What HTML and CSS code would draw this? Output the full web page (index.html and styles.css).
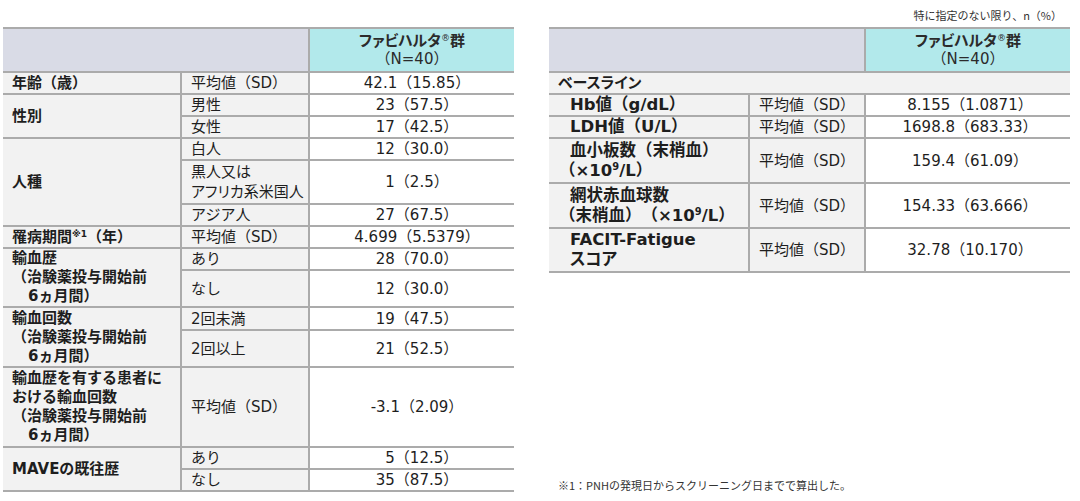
FILE: index.html
```html
<!DOCTYPE html>
<html lang="ja">
<head>
<meta charset="utf-8">
<title>ベースライン特性</title>
<link rel="stylesheet" href="styles.css">
</head>
<body>
<div class="page">
  <div class="col-left">
    <table class="tbl tbl-left">
      <colgroup><col class="l1"><col class="l2"><col class="l3"></colgroup>
      <thead>
        <tr class="h44"><th colspan="2" class="hd-gray"></th><th class="hd-cyan"><div class="hd-title">ファビハルタ<sup class="reg">®</sup>群</div><div>（N=40）</div></th></tr>
      </thead>
      <tbody>
        <tr class="h22"><td class="lab">年齢（歳）</td><td class="stat">平均値（SD）</td><td class="val">42.1（15.85）</td></tr>
        <tr class="h22"><td class="lab" rowspan="2">性別</td><td class="stat">男性</td><td class="val">23（57.5）</td></tr>
        <tr class="h22"><td class="stat">女性</td><td class="val">17（42.5）</td></tr>
        <tr class="h22"><td class="lab" rowspan="3">人種</td><td class="stat">白人</td><td class="val">12（30.0）</td></tr>
        <tr class="h44"><td class="stat kana">黒人又は<br>アフリカ系米国人</td><td class="val">1（2.5）</td></tr>
        <tr class="h22"><td class="stat">アジア人</td><td class="val">27（67.5）</td></tr>
        <tr class="h22"><td class="lab">罹病期間<sup class="note">※1</sup>（年）</td><td class="stat">平均値（SD）</td><td class="val">4.699（5.5379）</td></tr>
        <tr class="h22"><td class="lab multi" rowspan="2">輸血歴<br>（治験薬投与開始前<br><span class="ind">6ヵ月間）</span></td><td class="stat">あり</td><td class="val">28（70.0）</td></tr>
        <tr class="h37"><td class="stat">なし</td><td class="val">12（30.0）</td></tr>
        <tr class="h23"><td class="lab multi" rowspan="2">輸血回数<br>（治験薬投与開始前<br><span class="ind">6ヵ月間）</span></td><td class="stat">2回未満</td><td class="val">19（47.5）</td></tr>
        <tr class="h37"><td class="stat">2回以上</td><td class="val">21（52.5）</td></tr>
        <tr class="h80"><td class="lab multi">輸血歴を有する患者に<br>おける輸血回数<br>（治験薬投与開始前<br><span class="ind">6ヵ月間）</span></td><td class="stat">平均値（SD）</td><td class="val">-3.1（2.09）</td></tr>
        <tr class="h22"><td class="lab" rowspan="2">MAVEの既往歴</td><td class="stat">あり</td><td class="val">&#8199;5（12.5）</td></tr>
        <tr class="h22"><td class="stat">なし</td><td class="val">35（87.5）</td></tr>
      </tbody>
    </table>
  </div>
  <div class="col-right">
    <p class="unit">特に指定のない限り、n（%）</p>
    <table class="tbl tbl-right">
      <colgroup><col class="r1"><col class="r2"><col class="r3"></colgroup>
      <thead>
        <tr class="h44"><th colspan="2" class="hd-gray"></th><th class="hd-cyan"><div class="hd-title">ファビハルタ<sup class="reg">®</sup>群</div><div>（N=40）</div></th></tr>
      </thead>
      <tbody>
        <tr class="h22"><td colspan="3" class="lab sec">ベースライン</td></tr>
        <tr class="h22"><td class="lab sub">Hb値（g/dL）</td><td class="stat">平均値（SD）</td><td class="val">8.155（1.0871）</td></tr>
        <tr class="h22"><td class="lab sub">LDH値（U/L）</td><td class="stat">平均値（SD）</td><td class="val">1698.8（683.33）</td></tr>
        <tr class="h45"><td class="lab sub">血小板数（末梢血）<br><span class="out">（×10<sup class="exp">9</sup>/L）</span></td><td class="stat">平均値（SD）</td><td class="val">159.4（61.09）</td></tr>
        <tr class="h45"><td class="lab sub">網状赤血球数<br><span class="out">（末梢血）（×10<sup class="exp">9</sup>/L）</span></td><td class="stat">平均値（SD）</td><td class="val">154.33（63.666）</td></tr>
        <tr class="h44"><td class="lab sub">FACIT-Fatigue<br><span class="kana">スコア</span></td><td class="stat">平均値（SD）</td><td class="val">32.78（10.170）</td></tr>
      </tbody>
    </table>
    <p class="foot">※1：PNHの発現日からスクリーニング日までで算出した。</p>
  </div>
</div>
</body>
</html>
```

FILE: styles.css
```css
html, body {
  margin: 0;
  padding: 0;
  background: #ffffff;
}
body {
  width: 1080px;
  height: 501px;
  overflow: hidden;
  font-family: "DejaVu Sans", "Noto Sans CJK JP", sans-serif;
  color: #1e1e1e;
  text-spacing-trim: space-all;
}
.page {
  display: flex;
  gap: 35px;
  padding-left: 3px;
  height: 501px;
  box-sizing: border-box;
}
.col-left {
  padding-top: 27px;
}
.col-right {
  display: flex;
  flex-direction: column;
  width: 521px;
}
.unit {
  margin: 0;
  height: 27px;
  box-sizing: border-box;
  padding: 8px 8px 0 0;
  font-family: "Noto Sans CJK JP", sans-serif;
  font-size: 11px;
  line-height: 14px;
  text-align: right;
  color: #333;
}
.foot {
  margin: auto 0 0 0;
  padding: 0 0 9px 9px;
  font-family: "Noto Sans CJK JP", sans-serif;
  font-size: 11px;
  line-height: 14px;
  color: #333;
}

.tbl {
  border-collapse: collapse;
  table-layout: fixed;
  font-size: 15px;
  line-height: 20px;
  border-top: 2px solid #9a9a9a;
  border-bottom: 2px solid #9a9a9a;
  border-left: hidden;
  border-right: hidden;
}
.tbl-left { width: 511px; }
.tbl-right { width: 521px; }
col.l1 { width: 178px; }
col.l2 { width: 128px; }
col.l3 { width: 205px; }
col.r1 { width: 200px; }
col.r2 { width: 116px; }
col.r3 { width: 205px; }

.tbl th, .tbl td {
  border: 2px solid #ababab;
  padding: 0 0 0 9px;
  vertical-align: middle;
  text-align: left;
  white-space: nowrap;
}
.h22 { height: 22px; }
.h23 { height: 23px; }
.h37 { height: 37px; }
.h44 { height: 44px; }
.h45 { height: 45px; }
.h80 { height: 80px; }

.hd-gray {
  background: #d9dbe6;
}
.tbl th.hd-cyan {
  background: #b2e9eb;
  text-align: center;
  padding: 0;
  font-weight: normal;
  line-height: 18px;
  color: #2b2b2b;
}
.hd-title {
  font-weight: bold;
  font-feature-settings: "palt";
}
.reg {
  font-size: 0.6em;
  line-height: 0;
  vertical-align: 0.55em;
  font-weight: normal;
}
.lab {
  background: #f2f2f2;
  font-weight: bold;
}
.tbl td.multi {
  line-height: 19px;
}
.stat {
  background: #f2f2f2;
}
.kana {
  font-feature-settings: "palt";
}
.tbl td.val {
  text-align: center;
  padding: 0 0 0 10px;
  background: #ffffff;
}
.tbl-right td.val {
  padding-left: 4px;
}
.note {
  font-size: 0.6em;
  line-height: 0;
  vertical-align: 0.6em;
}
.exp {
  font-size: 0.6em;
  line-height: 0;
  vertical-align: 0.6em;
}
.ind {
  padding-left: 16px;
}
.tbl td.sub {
  padding-left: 21px;
  font-size: 16.5px;
}
.out {
  display: inline-block;
  margin-left: -11px;
}
.tbl td.sec {
  padding-left: 9px;
  font-feature-settings: "palt";
}
```
